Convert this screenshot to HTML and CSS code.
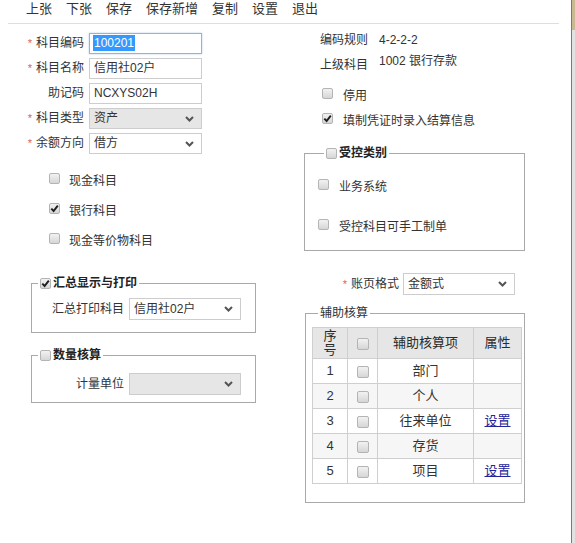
FILE: index.html
```html
<!DOCTYPE html>
<html lang="zh-CN">
<head>
<meta charset="utf-8">
<title>会计科目</title>
<link rel="stylesheet" href="styles.css">
</head>
<body>
<div class="page">
  <div class="main">
    <div class="toolbar">
      <span class="tbi">上张</span><span class="tbi">下张</span><span class="tbi">保存</span><span class="tbi">保存新增</span><span class="tbi">复制</span><span class="tbi">设置</span><span class="tbi">退出</span>
    </div>
    <div class="content">
      <div class="col-left">
        <div class="form">
          <div class="lbl"><span class="req">*</span>科目编码</div>
          <div class="input focus"><span class="seltext">100201</span></div>
          <div class="lbl"><span class="req">*</span>科目名称</div>
          <div class="input">信用社02户</div>
          <div class="lbl">助记码</div>
          <div class="input">NCXYS02H</div>
          <div class="lbl"><span class="req">*</span>科目类型</div>
          <div class="input select dis"><span>资产</span><svg class="chev" width="9" height="6" viewBox="0 0 9 6"><polyline points="1,1 4.5,4.5 8,1" /></svg></div>
          <div class="lbl"><span class="req">*</span>余额方向</div>
          <div class="input select"><span>借方</span><svg class="chev" width="9" height="6" viewBox="0 0 9 6"><polyline points="1,1 4.5,4.5 8,1" /></svg></div>
        </div>

        <div class="checks">
          <div class="chk"><span class="cb"></span><span>现金科目</span></div>
          <div class="chk"><span class="cb on"><svg width="9" height="9" viewBox="0 0 9 9"><path d="M1.3 4.6 L3.6 7 L7.8 1.6" /></svg></span><span>银行科目</span></div>
          <div class="chk"><span class="cb"></span><span>现金等价物科目</span></div>
        </div>

        <fieldset class="grp g-sum">
          <legend><span class="cb on"><svg width="9" height="9" viewBox="0 0 9 9"><path d="M1.3 4.6 L3.6 7 L7.8 1.6" /></svg></span><span>汇总显示与打印</span></legend>
          <div class="frow">
            <div class="flbl">汇总打印科目</div>
            <div class="input select fsel"><span>信用社02户</span><svg class="chev" width="9" height="6" viewBox="0 0 9 6"><polyline points="1,1 4.5,4.5 8,1" /></svg></div>
          </div>
        </fieldset>

        <fieldset class="grp g-qty">
          <legend><span class="cb"></span><span>数量核算</span></legend>
          <div class="frow">
            <div class="flbl">计量单位</div>
            <div class="input select dis fsel"><span></span><svg class="chev" width="9" height="6" viewBox="0 0 9 6"><polyline points="1,1 4.5,4.5 8,1" /></svg></div>
          </div>
        </fieldset>
      </div>

      <div class="col-right">
        <div class="info">
          <div class="irow"><div class="ilbl">编码规则</div><div class="ival">4-2-2-2</div></div>
          <div class="irow r2"><div class="ilbl">上级科目</div><div class="ival">1002 银行存款</div></div>
        </div>
        <div class="rchecks">
          <div class="chk"><span class="cb"></span><span>停用</span></div>
          <div class="chk"><span class="cb on"><svg width="9" height="9" viewBox="0 0 9 9"><path d="M1.3 4.6 L3.6 7 L7.8 1.6" /></svg></span><span>填制凭证时录入结算信息</span></div>
        </div>

        <fieldset class="grp g-ctl">
          <legend><span class="cb"></span><span>受控类别</span></legend>
          <div class="chk"><span class="cb"></span><span>业务系统</span></div>
          <div class="chk"><span class="cb"></span><span>受控科目可手工制单</span></div>
        </fieldset>

        <div class="yrow">
          <div class="ylbl"><span class="req">*</span>账页格式</div>
          <div class="input select ysel"><span>金额式</span><svg class="chev" width="9" height="6" viewBox="0 0 9 6"><polyline points="1,1 4.5,4.5 8,1" /></svg></div>
        </div>

        <fieldset class="grp g-aux">
          <legend class="plain">辅助核算</legend>
          <table class="aux">
            <colgroup><col class="c1"><col class="c2"><col class="c3"><col class="c4"></colgroup>
            <thead>
              <tr><th>序<br>号</th><th><span class="cb"></span></th><th>辅助核算项</th><th>属性</th></tr>
            </thead>
            <tbody>
              <tr><td>1</td><td><span class="cb"></span></td><td>部门</td><td></td></tr>
              <tr class="alt"><td>2</td><td><span class="cb"></span></td><td>个人</td><td></td></tr>
              <tr><td>3</td><td><span class="cb"></span></td><td>往来单位</td><td><a href="#">设置</a></td></tr>
              <tr class="alt"><td>4</td><td><span class="cb"></span></td><td>存货</td><td></td></tr>
              <tr><td>5</td><td><span class="cb"></span></td><td>项目</td><td><a href="#">设置</a></td></tr>
            </tbody>
          </table>
        </fieldset>
      </div>
    </div>
  </div>
  <div class="edge"></div>
</div>
</body>
</html>
```

FILE: styles.css
```css
* { box-sizing: border-box; }
html, body { margin: 0; padding: 0; background: #fff; }
body {
  font-family: "Liberation Sans", "Noto Sans CJK SC", sans-serif;
  font-size: 12px;
  line-height: 16px;
  color: #333;
}
.page { display: flex; width: 575px; height: 543px; overflow: hidden; }
.main { flex: 1; min-width: 0; }
.edge {
  width: 4px;
  border-left: 1px solid #7a7a7a;
  background: linear-gradient(#c9b891 0, #c9b891 30px, #e2e2e2 30px);
}

/* toolbar */
.toolbar {
  display: flex;
  height: 24px;
  margin: 0 12px 0 8px;
  padding-left: 18px;
  border-bottom: 1px solid #dedede;
  font-size: 13px;
  line-height: 18px;
  color: #333;
}
.tbi { margin-right: 14px; }

.content { display: grid; grid-template-columns: 290px 1fr; }

/* form */
.form {
  display: grid;
  grid-template-columns: 89px 113px;
  grid-auto-rows: 21px;
  row-gap: 4px;
  margin-top: 9px;
}
.lbl { text-align: right; padding-right: 5px; line-height: 21px; white-space: nowrap; }
.req { color: #d9605a; margin-right: 4px; font-size: 11px; }

.input {
  height: 21px;
  border: 1px solid #cdcdcd;
  background: #fff;
  padding: 0 4px;
  line-height: 19px;
  white-space: nowrap;
}
.input.focus { border-color: #86b7e8; box-shadow: 0 0 2px rgba(90, 150, 220, .45); }
.seltext { background: #3399ff; color: #fff; padding: 1px 1px; margin-left: -1px; }
.select { display: flex; align-items: center; justify-content: space-between; padding-right: 7px; }
.select.dis { background: #e6e6e6; }
.chev { flex: none; fill: none; stroke: #555; stroke-width: 2; }

/* checkboxes */
.cb {
  display: inline-block;
  flex: none;
  width: 11px;
  height: 11px;
  border: 1px solid #b4b4b4;
  border-radius: 2px;
  background: linear-gradient(#f2f2f2, #d6d6d6);
  position: relative;
}
.cb svg { display: block; margin: 0; }
.cb svg path { fill: none; stroke: #1e1e1e; stroke-width: 1.9; }

.chk { display: flex; align-items: flex-start; height: 20px; line-height: 20px; }
.chk .cb { margin-top: 2px; margin-right: 10px; }

.checks { margin: 17px 0 0 49px; display: grid; row-gap: 10px; }
.checks .chk .cb { margin-right: 9px; }

/* group boxes */
.grp { margin: 0; padding: 0; border: 1px solid #a9a9a9; min-width: 0; }
.grp legend {
  display: flex;
  align-items: center;
  margin-left: 6px;
  padding: 0 2px;
  font-weight: bold;
  line-height: 16px;
  color: #222;
}
.grp legend .cb { margin-right: 2px; }
.grp legend.plain { font-weight: normal; color: #333; }

.frow { display: flex; align-items: center; }
.flbl { width: 97px; text-align: right; padding-right: 5px; }
.fsel { width: 112px; height: 22px; }

.g-sum { margin: 24px 0 0 31px; width: 225px; padding: 7px 0 12px 0; }
.g-qty { margin: 14px 0 0 31px; width: 225px; padding: 10px 0 7px 0; }

/* right column */
.info { margin-top: 8px; }
.irow { display: flex; align-items: flex-start; margin-left: 30px; }
.irow.r2 { margin-top: 5px; }
.ilbl { width: 59px; }
.irow.r2 .ilbl { padding-top: 4px; }

.rchecks { margin: 13px 0 0 32px; display: grid; row-gap: 5px; }

.g-ctl { margin: 14px 0 0 14px; width: 221px; padding: 16px 0 13px 13px; display: grid; row-gap: 20px; }

.yrow { display: flex; align-items: center; margin-top: 22px; height: 22px; }
.ylbl { width: 113px; text-align: right; padding-right: 4px; }
.ysel { width: 112px; height: 22px; }

.g-aux { margin: 10px 0 0 15px; width: 220px; padding: 6px 0 18px 6px; }

table.aux {
  border-collapse: collapse;
  width: 209px;
  table-layout: fixed;
  font-size: 13px;
  color: #333;
}
.aux col.c1 { width: 35px; }
.aux col.c2 { width: 30px; }
.aux col.c3 { width: 96px; }
.aux col.c4 { width: 48px; }
.aux th, .aux td {
  border: 1px solid #cfcfcf;
  text-align: center;
  padding: 0;
  vertical-align: middle;
}
.aux th { background: #e6e6e6; height: 31px; font-weight: normal; line-height: 14px; color: #2a2a2a; }
.aux td { height: 25px; line-height: 16px; background: #fff; }
.aux tr.alt td { background: #f6f6f6; }
.aux .cb { vertical-align: middle; width: 12px; height: 12px; }
.aux a { color: #23239a; text-decoration: underline; }
```
